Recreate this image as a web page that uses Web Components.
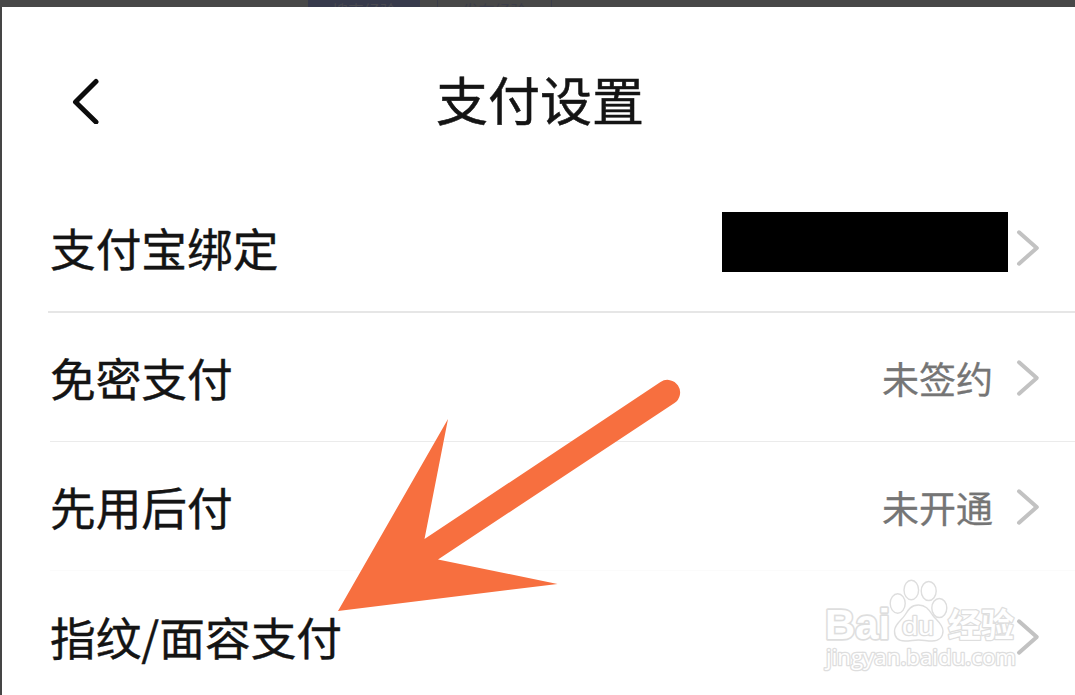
<!DOCTYPE html>
<html lang="zh-CN">
<head>
<meta charset="UTF-8">
<title>支付设置</title>
<style>
    html, body {
        margin: 0;
        width: 1075px;
        height: 695px;
        overflow: hidden;
    }
    body {
        position: relative;
        display: flex;
        flex-direction: column;
        background: #454545;
        font-family: "Noto Sans CJK SC", sans-serif;
        color: #141414;
    }
    main {
        flex: 1;
        min-height: 0;
        margin-left: 2px;
        background: #fff;
        overflow: hidden;
    }
</style>
</head>
<body>
<page-strip></page-strip>
<main>
    <title-bar>支付设置</title-bar>
    <setting-row style="--line: 2px solid #e6e6e6; --height: 130px; --inset: 46px">支付宝绑定<redacted-value slot="value"></redacted-value></setting-row>
    <setting-row style="--line: 1px solid #ebebeb; --height: 129px; --inset: 48px">免密支付<span slot="value">未签约</span></setting-row>
    <setting-row style="--line: 1px solid #fbfbfb; --height: 129px">先用后付<span slot="value">未开通</span></setting-row>
    <setting-row style="--line: 0 solid; --height: 130px">指纹/面容支付</setting-row>
</main>
<pointer-arrow></pointer-arrow>
<site-watermark></site-watermark>

<script>
class PageStrip extends HTMLElement {
    constructor() {
        super();
        this.attachShadow({ mode: 'open' });
    }

    connectedCallback() {
        this.shadowRoot.innerHTML = `
            <style>
                :host {
                    display: flex;
                    gap: 17px;
                    flex: none;
                    box-sizing: border-box;
                    height: 7px;
                    padding-left: 308px;
                    background: #484848;
                    overflow: hidden;
                }
                div {
                    box-sizing: border-box;
                    width: 112px;
                    height: 32px;
                    font-size: 16px;
                    line-height: 20px;
                    text-align: center;
                    color: #4a4a50;
                    background: #373a4b;
                }
                .outline {
                    width: 115px;
                    background: none;
                    border: solid #3c3e4a;
                    border-width: 0 1px;
                    color: #3c3e4a;
                }
            </style>
            <div>搜索经验</div>
            <div class="outline">发布经验</div>
        `;
    }
}

class TitleBar extends HTMLElement {
    constructor() {
        super();
        this.attachShadow({ mode: 'open' });
    }

    connectedCallback() {
        this.shadowRoot.innerHTML = `
            <style>
                :host {
                    display: grid;
                    grid-template-columns: 103px 1fr 100px;
                    align-items: center;
                    align-content: start;
                    box-sizing: border-box;
                    height: 176px;
                    padding-top: 62px;
                }
                svg {
                    display: block;
                    margin-left: 68px;
                }
                h1 {
                    margin: 0;
                    font-size: 52px;
                    font-weight: 400;
                    line-height: 60px;
                    text-align: center;
                    -webkit-text-stroke: 0.5px;
                }
            </style>
            <svg width="32" height="50" viewBox="0 0 32 50" fill="none" stroke="#0c0c0c" stroke-width="5" stroke-linecap="round" stroke-linejoin="round">
                <path d="M26 7.500 5.500 28 26 48" />
            </svg>
            <h1><slot></slot></h1>
        `;
    }
}

class SettingRow extends HTMLElement {
    constructor() {
        super();
        this.attachShadow({ mode: 'open' });
    }

    connectedCallback() {
        this.shadowRoot.innerHTML = `
            <style>
                :host {
                    display: flex;
                    align-items: center;
                    box-sizing: border-box;
                    height: var(--height);
                    margin-left: var(--inset, 48px);
                    padding: 2px 33px 0 calc(48px - var(--inset, 48px));
                    border-bottom: var(--line);
                    font-size: 45.7px;
                    line-height: 60px;
                }
                .label {
                    flex: 1;
                    padding-bottom: 3px;
                    white-space: nowrap;
                    -webkit-text-stroke: 0.4px;
                }
                .value {
                    display: flex;
                    font-size: 37px;
                    color: #757575;
                    -webkit-text-stroke: 0.3px;
                }
                ::slotted(span) {
                    margin-right: 23px;
                }
                svg {
                    flex: none;
                }
            </style>
            <div class="label"><slot></slot></div>
            <div class="value"><slot name="value"></slot></div>
            <svg width="26" height="40" viewBox="0 0 26 40" fill="none" stroke="#c2c2c2" stroke-width="4" stroke-linecap="round" stroke-linejoin="round">
                <path d="M3 4.300 20.800 20 3 35.700"/>
            </svg>
        `;
    }
}

class RedactedValue extends HTMLElement {
    constructor() {
        super();
        this.attachShadow({ mode: 'open' });
    }

    connectedCallback() {
        this.shadowRoot.innerHTML = `
            <style>
                :host {
                    display: block;
                    width: 286px;
                    height: 60px;
                    margin: -12px 8px 0 0;
                    background: #000;
                }
            </style>
        `;
    }
}

class PointerArrow extends HTMLElement {
    constructor() {
        super();
        this.attachShadow({ mode: 'open' });
    }

    connectedCallback() {
        this.shadowRoot.innerHTML = `
            <style>
                :host {
                    position: absolute;
                    left: 330px;
                    top: 370px;
                }
                svg {
                    display: block;
                }
            </style>
            <svg width="360" height="250" viewBox="330 370 360 250">
                <path fill="#f76f3f" d="M338 611 448 419 424.5 539 660.5 382A12.6 12.6 0 0 1 674.5 403L438 559.5 557.5 584Z"/>
            </svg>
        `;
    }
}

class SiteWatermark extends HTMLElement {
    constructor() {
        super();
        this.attachShadow({ mode: 'open' });
    }

    connectedCallback() {
        this.shadowRoot.innerHTML = `
            <style>
                :host {
                    position: absolute;
                    left: 815px;
                    top: 570px;
                }
                svg {
                    display: block;
                }
                text {
                    paint-order: stroke;
                    stroke-linejoin: round;
                }
            </style>
            <svg width="210" height="110" viewBox="815 570 210 110" fill="#fff" stroke="#dedede" stroke-width="1.4">
                <ellipse cx="897.7" cy="603.5" rx="7.5" ry="9.7"/>
                <ellipse cx="911.3" cy="590" rx="7.3" ry="9.7"/>
                <ellipse cx="928.7" cy="591" rx="7.5" ry="9.5"/>
                <ellipse cx="939.3" cy="608" rx="7.500" ry="9.500"/>
                <path d="M918.500 605C911 605 908 610 905 615C902 620 894.500 624 894.500 631C894.500 637 898 641 905 641C910 641 914 640 918.500 640C923 640 927 641 932 641C939 641 943 637 943 631C943 624 936 620 932.500 615C929 610 926 605 918.500 605Z"/>
                <g font-family="Liberation Sans, sans-serif" font-weight="700" stroke-width="2.6">
                    <text x="825" y="639" font-size="43" textLength="65" lengthAdjust="spacingAndGlyphs" stroke-width="3.4">Bai</text>
                    <text x="902" y="635" font-size="26" font-weight="400" textLength="32" lengthAdjust="spacingAndGlyphs">du</text>
                </g>
                <text x="948" y="637" font-family="Noto Sans CJK SC, sans-serif" font-weight="700" font-size="33" stroke-width="2.6">经验</text>
                <text x="826" y="665" font-family="Open Sans, sans-serif" font-size="22" stroke-width="2.6" textLength="190" lengthAdjust="spacingAndGlyphs">jingyan.baidu.com</text>
            </svg>
        `;
    }
}

customElements.define('page-strip', PageStrip);
customElements.define('title-bar', TitleBar);
customElements.define('setting-row', SettingRow);
customElements.define('redacted-value', RedactedValue);
customElements.define('pointer-arrow', PointerArrow);
customElements.define('site-watermark', SiteWatermark);
</script>
</body>
</html>
